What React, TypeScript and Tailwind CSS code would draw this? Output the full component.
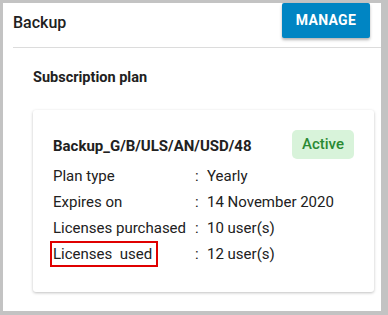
export default function App() {
  const rows = [
    { label: 'Plan type', value: 'Yearly' },
    { label: 'Expires on', value: '14 November 2020' },
    { label: 'Licenses purchased', value: '10 user(s)' },
  ];

  return (
    <div
      className="w-[388px] h-[315px] bg-[#c3c3c3] pt-[3px] pl-[3px] pr-[7px] pb-[4px]"
      style={{ fontFamily: 'Roboto, "Liberation Sans", sans-serif' }}
    >
      <div className="h-full bg-white pl-[10px] text-[#212121]">
        <div className="flex items-start justify-between h-[45px] border-b border-[#dcdcdc]">
          <h1 className="text-[16px] font-medium mt-[10px] leading-[20px]">Backup</h1>
          <button className="mr-[11px] w-[88px] h-[35px] bg-[#0085c3] text-white text-[14px] font-bold tracking-[0.3px] rounded-[2px] shadow-[0_2px_3px_rgba(0,0,0,0.3)]">
            MANAGE
          </button>
        </div>

        <div className="pl-[20px] pr-[7px]">
          <h2 className="mt-[21px] text-[14.5px] font-bold leading-[18px]">Subscription plan</h2>

          <div className="mt-[23px] h-[182px] rounded-[3px] bg-white shadow-[0_1px_3px_rgba(0,0,0,0.25)] pl-[20px] pr-[20px] pt-[20px]">
            <div className="flex items-start justify-between">
              <p className="mt-[7px] text-[15px] font-bold leading-[18px]">Backup_G/B/ULS/AN/USD/48</p>
              <span className="w-[62px] h-[29px] flex items-center justify-center rounded-[5px] bg-[#d8f3da] text-[#2a8a34] text-[15px] font-medium">
                Active
              </span>
            </div>

            <div className="mt-[4px] text-[15px] leading-[26px]">
              {rows.map((r) => (
                <div key={r.label} className="flex">
                  <span className="w-[142px] shrink-0">{r.label}</span>
                  <span className="w-[12px]">:</span>
                  <span>{r.value}</span>
                </div>
              ))}
              <div className="flex">
                <span className="w-[142px] shrink-0">
                  <span className="inline-block -ml-[3px] w-[108px] h-[26px] border-2 border-[#e00000] pl-[1px] leading-[22px]">
                    Licenses&nbsp; used
                  </span>
                </span>
                <span className="w-[12px]">:</span>
                <span>12 user(s)</span>
              </div>
            </div>
          </div>
        </div>
      </div>
    </div>
  );
}
